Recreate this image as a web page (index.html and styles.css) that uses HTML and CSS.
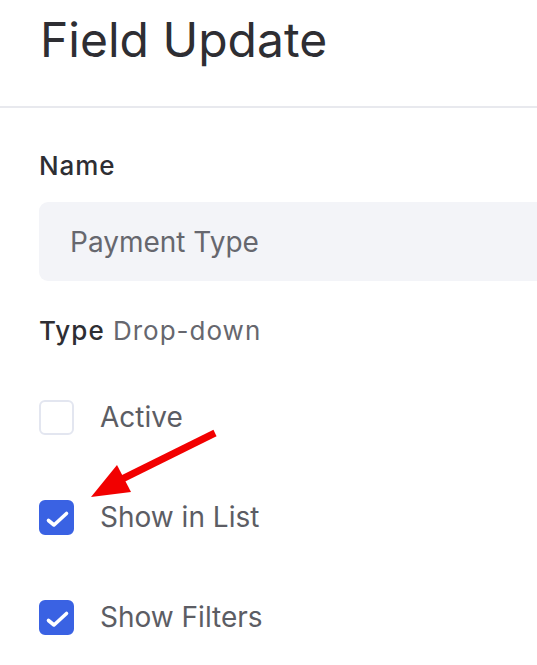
FILE: index.html
```html
<!DOCTYPE html>
<html lang="en">

<head>
    <meta charset="UTF-8">
    <meta name="viewport" content="width=device-width, initial-scale=1.0">
    <title>Field Update</title>
    <link rel="stylesheet" href="styles.css">
</head>

<body>

    <!-- Cabecera -->
    <header class="page-header">
        <h1>Field Update</h1>
    </header>

    <!-- Formulario del campo -->
    <form class="field-form">
        <label class="field-label" for="fieldName">Name</label>
        <div class="text-input" id="fieldName">Payment Type</div>

        <p class="field-type"><strong>Type</strong> Drop-down</p>

        <div class="check-list">
            <div class="check-row">
                <span class="check-box"></span>
                <span class="check-text">Active</span>
            </div>
            <div class="check-row">
                <span class="check-box checked">
                    <svg viewBox="0 0 35 35"><path d="M9.5 20.5 L15 25 L27.5 13.5" /></svg>
                </span>
                <span class="check-text">Show in List</span>
            </div>
            <div class="check-row">
                <span class="check-box checked">
                    <svg viewBox="0 0 35 35"><path d="M9.5 20.5 L15 25 L27.5 13.5" /></svg>
                </span>
                <span class="check-text">Show Filters</span>
            </div>
        </div>
    </form>

    <!-- Flecha de anotación -->
    <svg class="annotation" viewBox="0 0 537 665">
        <line x1="215" y1="433" x2="112" y2="484" />
        <polygon points="91,497 117,465 131,492" />
    </svg>

</body>

</html>
```

FILE: styles.css
```css
/* Estilos generales */
body {
    font-family: Inter, "Noto Sans", sans-serif;
    background-color: #ffffff;
    margin: 0;
    padding: 0;
    overflow: hidden;
    color: #2e2e33;
}

/* Cabecera */
.page-header {
    padding: 11px 40px 37px;
    border-bottom: 2px solid #e8e9ee;
}

h1 {
    margin: 0;
    font-size: 48px;
    font-weight: 400;
    line-height: 58px;
}

/* Formulario */
.field-form {
    display: flex;
    flex-direction: column;
    padding: 43px 0 0 39px;
}

.field-label {
    font-size: 26px;
    font-weight: 500;
    line-height: 29px;
    letter-spacing: 0.9px;
}

.text-input {
    margin-top: 22px;
    height: 79px;
    width: calc(100% + 20px);
    background-color: #f3f4f8;
    border-radius: 9px;
    display: flex;
    align-items: center;
    padding-left: 31px;
    font-size: 28px;
    color: #66676e;
    box-sizing: border-box;
}

.field-type {
    margin: 35px 0 0;
    font-size: 26px;
    line-height: 29px;
    letter-spacing: 1px;
    color: #66676e;
}

.field-type strong {
    font-weight: 500;
    color: #2e2e33;
}

/* Casillas */
.check-list {
    display: flex;
    flex-direction: column;
    gap: 65px;
    margin-top: 55px;
}

.check-row {
    display: flex;
    align-items: center;
    gap: 26px;
}

.check-box {
    width: 35px;
    height: 35px;
    box-sizing: border-box;
    border: 2px solid #e3e6f0;
    border-radius: 6px;
    flex-shrink: 0;
}

.check-box.checked {
    background-color: #3a62e3;
    border-color: #3a62e3;
}

.check-box svg {
    display: block;
    width: 35px;
    height: 35px;
    margin: -2px;
}

.check-box path {
    fill: none;
    stroke: #ffffff;
    stroke-width: 3.6;
    stroke-linecap: round;
    stroke-linejoin: round;
}

.check-text {
    font-size: 28px;
    line-height: 35px;
    color: #5c5d64;
}

/* Flecha */
.annotation {
    position: absolute;
    left: 0;
    top: 0;
    width: 537px;
    height: 665px;
    pointer-events: none;
}

.annotation line {
    stroke: #f20000;
    stroke-width: 7;
}

.annotation polygon {
    fill: #f20000;
}
```
